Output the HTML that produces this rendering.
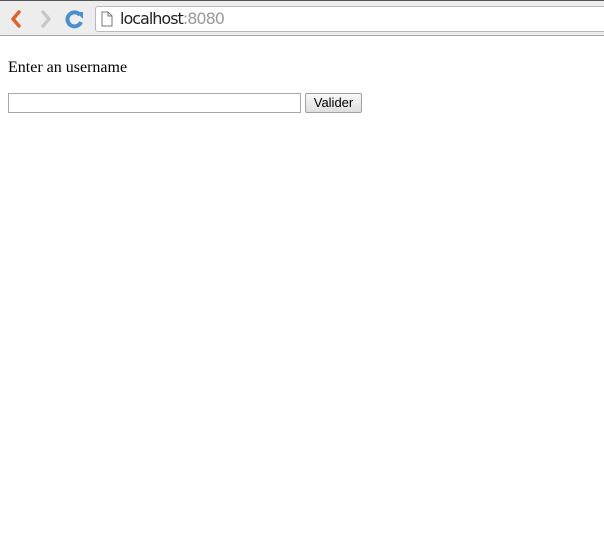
<!DOCTYPE html>
<html><head><style>
body{margin:0;width:604px;height:548px;background:#fff;overflow:hidden;position:relative}
.bar{position:absolute;left:0;top:0;width:604px;height:36px;background:#ededed;border-top:1px solid #555;box-sizing:border-box;border-bottom:1px solid #a8a8a8}
.url{position:absolute;left:95px;top:5px;width:520px;height:26px;background:#fff;border:1px solid #b9b9b9;border-radius:3px;box-sizing:border-box}
.urltxt{position:absolute;left:120px;top:8px;font:16px "DejaVu Sans",sans-serif;color:#222;letter-spacing:-1px}
.urltxt span{color:#999}
p{position:absolute;left:8px;top:59px;margin:0;font:16px "Liberation Serif",serif;color:#000}
.inp{position:absolute;left:8px;top:93px;width:293px;height:20px;border:1px solid #a9a9a9;box-sizing:border-box;background:#fff}
.btn{position:absolute;left:305px;top:93px;width:57px;height:20px;border:1px solid #a0a0a0;border-radius:2px;box-sizing:border-box;background:linear-gradient(#f8f8f8,#dedede);font:13px "Liberation Sans",sans-serif;text-align:center;line-height:18px;color:#000}
</style></head><body>
<div class="bar">
<svg style="position:absolute;left:8px;top:8px" width="16" height="20"><path d="M11 3 L5 10 L11 17" stroke="#e0642a" stroke-width="3.5" fill="none" stroke-linecap="round" stroke-linejoin="round"/></svg>
<svg style="position:absolute;left:38px;top:8px" width="16" height="20"><path d="M5 3 L11 10 L5 17" stroke="#c8c8c8" stroke-width="3.5" fill="none" stroke-linecap="round" stroke-linejoin="round"/></svg>
<svg style="position:absolute;left:64px;top:7px" width="22" height="22"><path d="M16 7 A7 7 0 1 0 17 14" stroke="#4a8fd0" stroke-width="4" fill="none"/><path d="M12 4 L19 4 L19 11 Z" fill="#4a8fd0"/></svg>
<div class="url"></div>
<svg style="position:absolute;left:101px;top:10px" width="12" height="16"><path d="M1 1 H7 L11 5 V15 H1 Z M7 1 V5 H11" stroke="#777" fill="#fff"/></svg>
<div class="urltxt">localhost<span>:8080</span></div>
</div>
<p>Enter an username</p>
<div class="inp"></div>
<div class="btn">Valider</div>
</body></html>
